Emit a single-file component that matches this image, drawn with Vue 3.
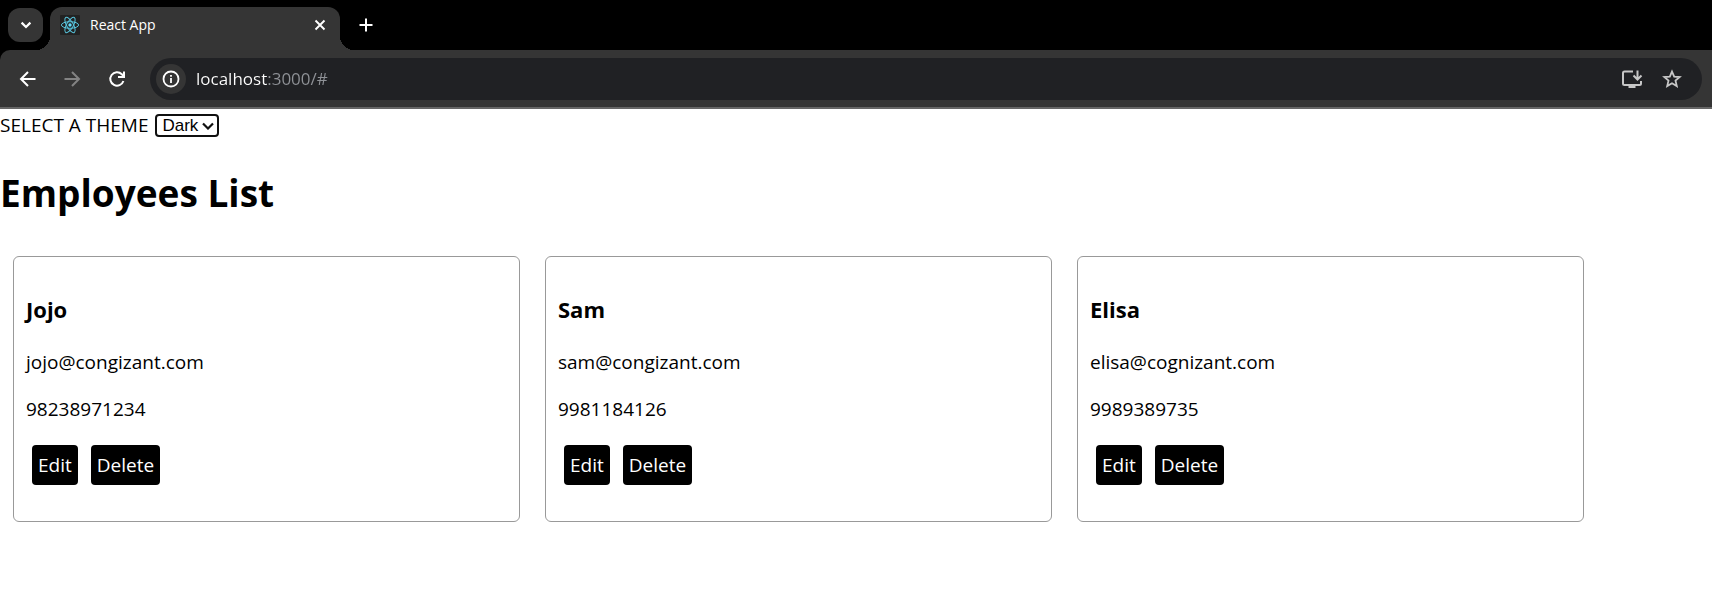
<script setup>
import { ref } from 'vue'

const theme = ref('Dark')
const address = ref('localhost:3000/#')
const employees = [
  { name: 'Jojo', email: 'jojo@congizant.com', phone: '98238971234' },
  { name: 'Sam', email: 'sam@congizant.com', phone: '9981184126' },
  { name: 'Elisa', email: 'elisa@cognizant.com', phone: '9989389735' },
]
</script>

<template>
  <div class="window">
    <header class="chrome">
      <div class="tabstrip">
        <button class="tab-search" type="button" aria-label="Search tabs">
          <svg width="12" height="12" viewBox="0 0 12 12"><path d="M1.6 3.6 6 8 10.4 3.6" fill="none" stroke="#fff" stroke-width="2.2" /></svg>
        </button>
        <div class="tab">
          <svg class="favicon" width="20" height="20" viewBox="0 0 20 20">
            <rect width="20" height="20" rx="1" fill="#222" />
            <g fill="none" stroke="#58c4dc" stroke-width="1">
              <ellipse cx="10" cy="10" rx="8.6" ry="3.3" />
              <ellipse cx="10" cy="10" rx="8.6" ry="3.3" transform="rotate(60 10 10)" />
              <ellipse cx="10" cy="10" rx="8.6" ry="3.3" transform="rotate(120 10 10)" />
            </g>
            <circle cx="10" cy="10" r="1.7" fill="#61dafb" />
          </svg>
          <span class="tab-title">React App</span>
          <button class="icon-button" type="button" aria-label="Close tab">
            <svg width="12" height="12" viewBox="0 0 12 12"><path d="M1.5 1.5 10.5 10.5M10.5 1.5 1.5 10.5" stroke="#fff" stroke-width="1.9" /></svg>
          </button>
        </div>
        <button class="icon-button new-tab" type="button" aria-label="New tab">
          <svg width="14" height="14" viewBox="0 0 14 14"><path d="M7 .5V13.5M.5 7H13.5" stroke="#fff" stroke-width="2" /></svg>
        </button>
      </div>
      <div class="toolbar">
        <nav class="nav">
          <button class="icon-button" type="button" aria-label="Back">
            <svg width="20" height="20" viewBox="0 0 20 20"><path d="M17.500 10H3.500M10 3 3 10l7 7" fill="none" stroke="#fff" stroke-width="2" /></svg>
          </button>
          <button class="icon-button" type="button" aria-label="Forward">
            <svg width="20" height="20" viewBox="0 0 20 20"><path d="M1.500 10H15.500M9 3l7 7-7 7" fill="none" stroke="#838383" stroke-width="2" /></svg>
          </button>
          <button class="icon-button" type="button" aria-label="Reload">
            <svg width="20" height="20" viewBox="0 0 20 20"><path d="M15.400 12A6.700 6.700 0 1 1 13.800 5.300L15.800 7.300M16 2.500V8H10" fill="none" stroke="#fff" stroke-width="2" /></svg>
          </button>
        </nav>
        <div class="omnibox">
          <button class="site-info" type="button" aria-label="View site information">
            <svg width="18" height="18" viewBox="0 0 18 18"><circle cx="9" cy="9" r="7.5" fill="none" stroke="#fff" stroke-width="1.8" /><path d="M9 8V13M9 5V6.8" stroke="#fff" stroke-width="1.8" /></svg>
          </button>
          <input v-model="address" class="address" type="text" aria-label="Address" spellcheck="false">
          <button class="icon-button" type="button" aria-label="Install app">
            <svg width="22" height="20" viewBox="0 0 22 20"><path d="M12 2.500H3.500Q2 2.500 2 4V14.500Q2 16 3.500 16H18.500Q20 16 20 14.500V12" fill="none" stroke="#c7c7c7" stroke-width="2" /><path d="M7.500 16H14.500V19H7.500Z" fill="#c7c7c7" /><path d="M16.500 1.500V9.500M12.500 6.500 16.500 10.500 20.500 6.500" fill="none" stroke="#c7c7c7" stroke-width="2" /></svg>
          </button>
          <button class="icon-button" type="button" aria-label="Bookmark this tab">
            <svg width="20" height="20" viewBox="0 0 20 20"><path d="M10 2.600 12.200 7.600 17.700 8 13.500 11.600 14.800 17.100 10 14.200 5.200 17.100 6.500 11.600 2.300 8 7.800 7.600Z" fill="none" stroke="#c7c7c7" stroke-width="1.800" /></svg>
          </button>
        </div>
      </div>
    </header>

    <main class="page">
      <div class="theme-row">
        <label for="theme">SELECT A THEME</label>
        <span class="select-wrap">
          <select id="theme" v-model="theme">
            <option>Dark</option>
            <option>Light</option>
          </select>
          <svg class="chevron" width="12" height="8" viewBox="0 0 12 8"><path d="M1 1.500 6 6.500 11 1.500" fill="none" stroke="#101010" stroke-width="2.200" /></svg>
        </span>
      </div>
      <h1>Employees List</h1>
      <section class="cards">
        <article v-for="person in employees" :key="person.name" class="card">
          <h3>{{ person.name }}</h3>
          <p>{{ person.email }}</p>
          <p>{{ person.phone }}</p>
          <div class="actions">
            <a href="#">Edit</a>
            <a href="#">Delete</a>
          </div>
        </article>
      </section>
    </main>
  </div>
</template>

<style>
body {
  margin: 0;
  background: #fff;
}
</style>

<style scoped>
.window {
  font-family: "Open Sans", "Noto Sans", sans-serif;
  color: #000;
}
.window * {
  box-sizing: border-box;
}
button {
  display: flex;
  align-items: center;
  justify-content: center;
  flex: none;
  padding: 0;
  border: 0;
  background: none;
}
svg {
  display: block;
  flex: none;
}
.chrome {
  background: #000;
}
.tabstrip {
  display: flex;
  height: 50px;
  padding: 7px 8px 0;
}
.tab-search {
  width: 35px;
  height: 34px;
  margin-top: 1px;
  border-radius: 12px;
  background: #353535;
}
.tab {
  position: relative;
  display: flex;
  align-items: center;
  width: 290px;
  margin-left: 7px;
  padding: 0 10px 7px;
  border-radius: 12px 12px 0 0;
  background: #353535;
}
.tab::before,
.tab::after {
  content: "";
  position: absolute;
  bottom: 0;
  width: 14px;
  height: 14px;
}
.tab::before {
  right: 100%;
  background: radial-gradient(circle at 0 0, transparent 14px, #353535 14px);
}
.tab::after {
  left: 100%;
  background: radial-gradient(circle at 100% 0, transparent 14px, #353535 14px);
}
.tab-title {
  flex: 1;
  padding-left: 10px;
  font-size: 14px;
  line-height: 20px;
  color: #fff;
}
.icon-button {
  width: 20px;
  height: 20px;
}
.new-tab {
  margin: 8px 0 0 16px;
}
.toolbar {
  display: flex;
  align-items: center;
  height: 59px;
  padding: 0 10px 0 18px;
  border-bottom: 2px solid #666;
  border-radius: 10px 0 0 0;
  background: #353535;
}
.nav {
  display: flex;
  gap: 25px;
}
.omnibox {
  display: flex;
  flex: 1;
  align-items: center;
  gap: 20px;
  height: 42px;
  margin-left: 22px;
  padding: 0 20px 0 6px;
  border-radius: 21px;
  background: #202124;
}
.site-info {
  width: 30px;
  height: 30px;
  border-radius: 50%;
  background: #353535;
}
.address {
  flex: 1;
  min-width: 0;
  height: 28px;
  margin-left: -10px;
  padding: 0;
  border: 0;
  outline: 0;
  font: 17px/28px "Open Sans", "Noto Sans", sans-serif;
  color: transparent;
  background: linear-gradient(to right, #fff 72px, #8f9297 72px);
  background-clip: text;
}
.theme-row {
  display: flex;
  align-items: center;
  gap: 7px;
  padding-top: 3px;
  font-size: 19px;
  line-height: 27px;
}
.select-wrap {
  position: relative;
}
select {
  display: block;
  width: 64px;
  height: 23px;
  padding: 0 5px;
  border: 2px solid #101010;
  border-radius: 4px;
  appearance: none;
  background: #fff;
  font: 17px/19px "Liberation Sans", Arial, sans-serif;
  color: #000;
}
.chevron {
  position: absolute;
  top: 8px;
  right: 5px;
  pointer-events: none;
}
h1 {
  margin: 27px 0 37px;
  font-size: 37px;
  line-height: 53px;
}
.cards {
  display: grid;
  grid-template-columns: repeat(3, 1fr);
  gap: 25px;
  margin: 0 128px 0 13px;
}
.card {
  padding: 12px;
  border: 1px solid #999;
  border-radius: 6px;
}
h3 {
  margin: 25px 0 24px;
  font-size: 22px;
  line-height: 31px;
}
p {
  margin: 0 0 20px;
  font-size: 19px;
  line-height: 27px;
}
.actions {
  display: flex;
  gap: 13px;
  padding: 2px 6px 24px;
}
.actions a {
  padding: 6px;
  border-radius: 4px;
  background: #000;
  color: #fff;
  font-size: 19px;
  line-height: 28px;
  text-decoration: none;
}
</style>
